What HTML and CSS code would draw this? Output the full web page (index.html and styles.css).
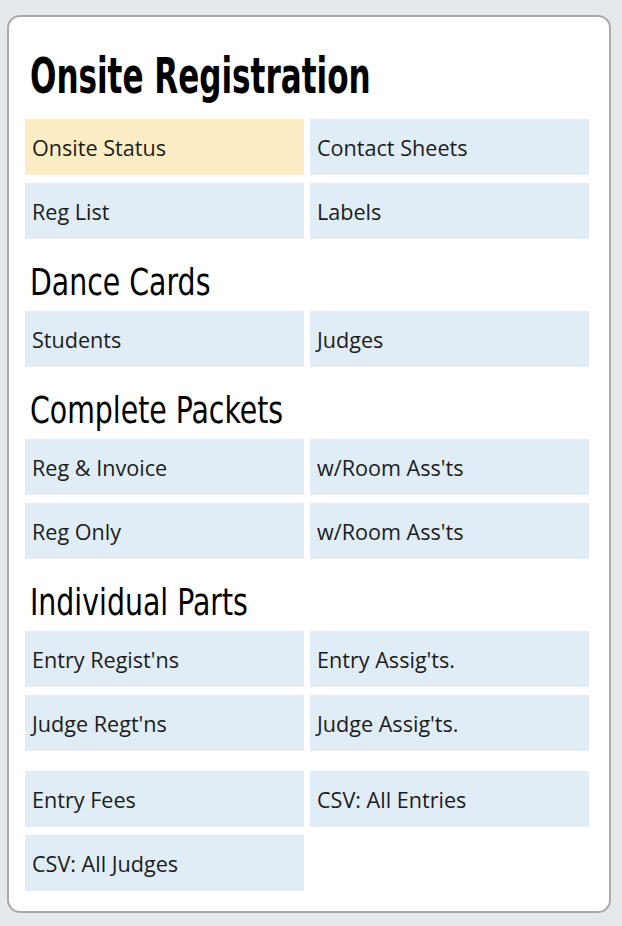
FILE: index.html
```html
<!DOCTYPE html>
<html lang="en">
<head>
<meta charset="utf-8">
<title>Onsite Registration</title>
<link rel="stylesheet" href="styles.css">
</head>
<body>
<div class="card">
  <h1 class="title">Onsite Registration</h1>
  <div class="grid">
    <a class="cell active">Onsite Status</a>
    <a class="cell">Contact Sheets</a>
    <a class="cell">Reg List</a>
    <a class="cell">Labels</a>
  </div>
  <h2 class="section">Dance Cards</h2>
  <div class="grid">
    <a class="cell">Students</a>
    <a class="cell">Judges</a>
  </div>
  <h2 class="section">Complete Packets</h2>
  <div class="grid">
    <a class="cell">Reg &amp; Invoice</a>
    <a class="cell">w/Room Ass'ts</a>
    <a class="cell">Reg Only</a>
    <a class="cell">w/Room Ass'ts</a>
  </div>
  <h2 class="section">Individual Parts</h2>
  <div class="grid">
    <a class="cell">Entry Regist'ns</a>
    <a class="cell">Entry Assig'ts.</a>
    <a class="cell">Judge Regt'ns</a>
    <a class="cell">Judge Assig'ts.</a>
  </div>
  <div class="grid extra">
    <a class="cell">Entry Fees</a>
    <a class="cell">CSV: All Entries</a>
    <a class="cell">CSV: All Judges</a>
  </div>
</div>
</body>
</html>
```

FILE: styles.css
```css
html, body {
  margin: 0;
  padding: 0;
}
body {
  background: #e5e9ec;
  font-family: "Open Sans", "Liberation Sans", sans-serif;
  color: #222;
  padding: 15px 11px 13px 7px;
}
.card {
  background: #fff;
  border: 2px solid #a9a9a9;
  border-radius: 13px;
  padding: 0 20px 20px 16px;
}
.title {
  font-family: "DejaVu Sans Condensed", "Liberation Sans", sans-serif;
  font-weight: bold;
  font-size: 50px;
  line-height: 60px;
  margin: 29px 0 13px 5px;
  color: #000;
  transform: scaleX(0.69);
  transform-origin: 0 50%;
  white-space: nowrap;
}
.section {
  font-family: "DejaVu Sans Condensed", "Liberation Sans", sans-serif;
  font-weight: normal;
  font-size: 38px;
  line-height: 44px;
  margin: 21px 0 7px 5px;
  color: #000;
  transform: scaleX(0.83);
  transform-origin: 0 50%;
  white-space: nowrap;
}
.grid {
  display: grid;
  grid-template-columns: 279px 279px;
  column-gap: 6px;
  row-gap: 8px;
}
.grid.extra {
  margin-top: 20px;
}
.cell {
  display: flex;
  align-items: center;
  height: 56px;
  padding-left: 7px;
  background: #e0edf6;
  font-size: 21.6px;
  color: #1c1c1c;
}
.cell.active {
  background: #fcedc4;
}
```
